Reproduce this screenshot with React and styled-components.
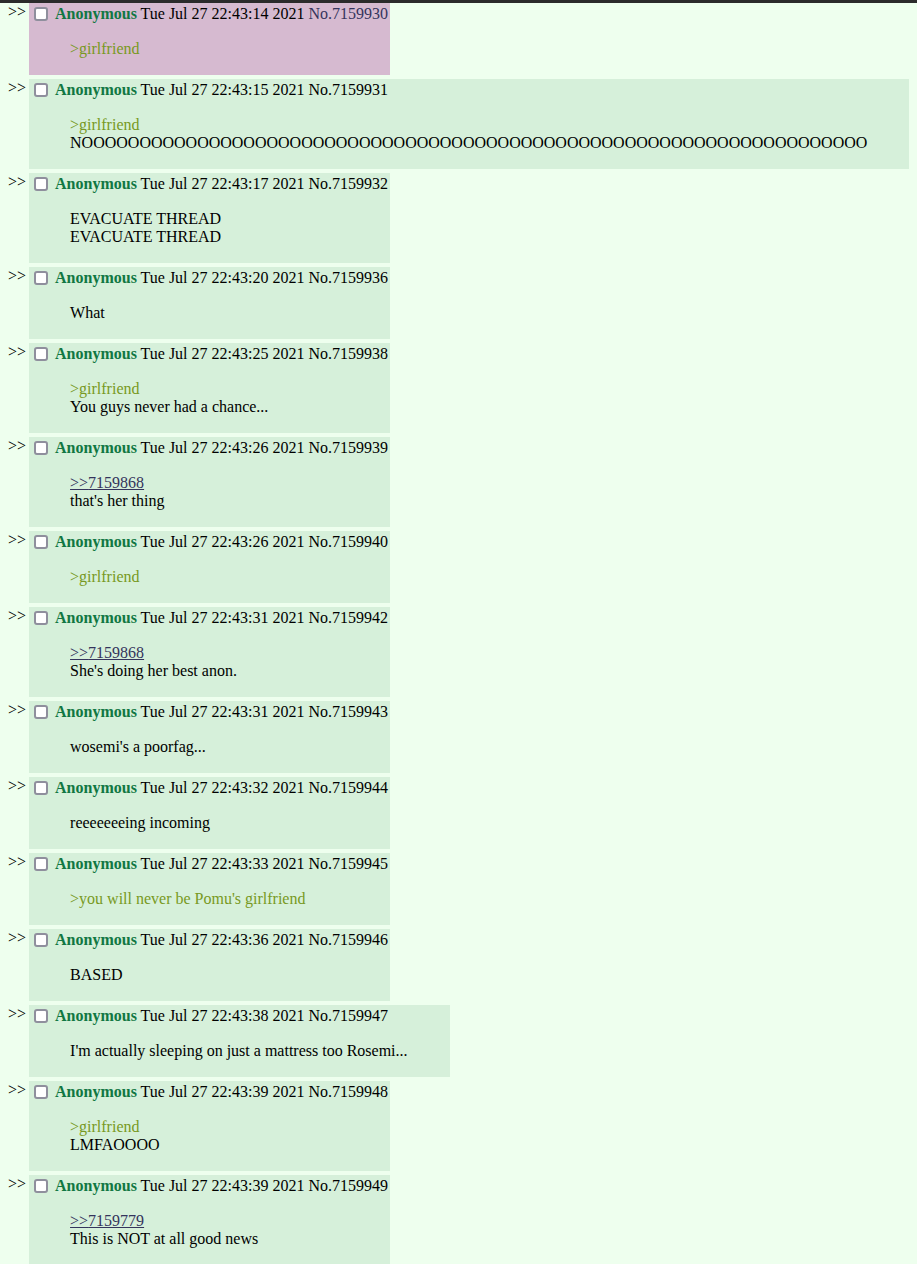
import React from "react";
import styled, { createGlobalStyle } from "styled-components";

const GlobalStyle = createGlobalStyle`
  html, body {
    margin: 0;
    padding: 0;
    background: #eeffee;
  }
  body {
    font-family: "Liberation Serif", "Times New Roman", serif;
    font-size: 16px;
    color: #000;
  }
`;

const longNo = "N" + "O".repeat(68);

const posts = [
  { no: 7159930, time: "14", highlight: true, lines: [{ green: ">girlfriend" }] },
  { no: 7159931, time: "15", lines: [{ green: ">girlfriend" }, { text: longNo }] },
  { no: 7159932, time: "17", lines: [{ text: "EVACUATE THREAD" }, { text: "EVACUATE THREAD" }] },
  { no: 7159936, time: "20", lines: [{ text: "What" }] },
  { no: 7159938, time: "25", lines: [{ green: ">girlfriend" }, { text: "You guys never had a chance..." }] },
  { no: 7159939, time: "26", lines: [{ quote: 7159868 }, { text: "that's her thing" }] },
  { no: 7159940, time: "26", lines: [{ green: ">girlfriend" }] },
  { no: 7159942, time: "31", lines: [{ quote: 7159868 }, { text: "She's doing her best anon." }] },
  { no: 7159943, time: "31", lines: [{ text: "wosemi's a poorfag..." }] },
  { no: 7159944, time: "32", lines: [{ text: "reeeeeeeing incoming" }] },
  { no: 7159945, time: "33", lines: [{ green: ">you will never be Pomu's girlfriend" }] },
  { no: 7159946, time: "36", lines: [{ text: "BASED" }] },
  { no: 7159947, time: "38", lines: [{ text: "I'm actually sleeping on just a mattress too Rosemi..." }] },
  { no: 7159948, time: "39", lines: [{ green: ">girlfriend" }, { text: "LMFAOOOO" }] },
  { no: 7159949, time: "39", lines: [{ quote: 7159779 }, { text: "This is NOT at all good news" }] },
];

function Line({ line }) {
  if (line.green) return <Green>{line.green}</Green>;
  if (line.quote) return <QuoteLink href="#">&gt;&gt;{line.quote}</QuoteLink>;
  return <span>{line.text}</span>;
}

function Post({ post }) {
  return (
    <PostContainer>
      <SideArrows>&gt;&gt;</SideArrows>
      <Reply highlight={post.highlight}>
        <PostInfo>
          <Check type="checkbox" />{" "}
          <Name>Anonymous</Name> <span>Tue Jul 27 22:43:{post.time} 2021</span>{" "}
          <PostNum highlight={post.highlight}>No.{post.no}</PostNum>
        </PostInfo>
        <Message>
          {post.lines.map((l, i) => (
            <React.Fragment key={i}>
              {i > 0 && <br />}
              <Line line={l} />
            </React.Fragment>
          ))}
        </Message>
      </Reply>
    </PostContainer>
  );
}

export default function App() {
  return (
    <>
      <GlobalStyle />
      <TopBar />
      <Thread>
        {posts.map((p) => (
          <Post key={p.no} post={p} />
        ))}
      </Thread>
    </>
  );
}

const TopBar = styled.div`
  height: 3px;
  background: #2b2b2b;
`;

const Thread = styled.div`
  padding: 0 8px;
  display: flex;
  flex-direction: column;
  gap: 4px;
`;

const PostContainer = styled.div`
  display: flex;
  align-items: flex-start;
`;

const SideArrows = styled.div`
  line-height: 18px;
  margin-right: 3px;
  color: #000;
  white-space: nowrap;
`;

const Reply = styled.div`
  background: ${(p) => (p.highlight ? "#d6bad0" : "#d6f0da")};
  padding: 2px;
`;

const PostInfo = styled.div`
  height: 18px;
  line-height: 18px;
  white-space: nowrap;
`;

const Check = styled.input`
  appearance: none;
  display: inline-block;
  box-sizing: border-box;
  width: 14px;
  height: 14px;
  margin: 2px 3px 0 3px;
  vertical-align: top;
  background: #fff;
  border: 2px solid #8f8f9d;
  border-radius: 3px;
`;

const Name = styled.span`
  color: #117743;
  font-weight: bold;
`;

const PostNum = styled.span`
  color: ${(p) => (p.highlight ? "#34345c" : "#000")};
`;

const Message = styled.blockquote`
  margin: 17px 40px 15px 39px;
  line-height: 18px;
  white-space: nowrap;
`;

const Green = styled.span`
  color: #789922;
`;

const QuoteLink = styled.a`
  color: #34345c;
  text-decoration: underline;
`;
